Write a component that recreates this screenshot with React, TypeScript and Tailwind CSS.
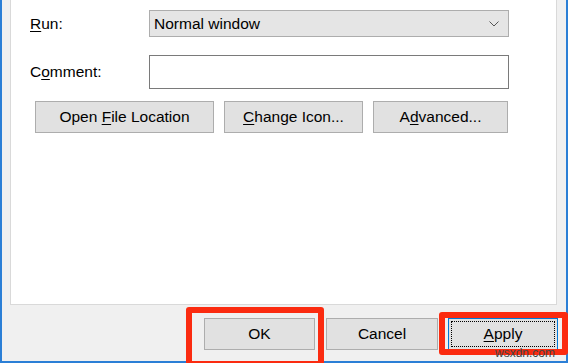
import React from "react";

const font = { fontFamily: '"Liberation Sans", Arial, sans-serif' };

function U({ children }: { children: React.ReactNode }) {
  return <span className="underline underline-offset-[2px] decoration-1">{children}</span>;
}

function Btn({ w, children }: { w: string; children: React.ReactNode }) {
  return (
    <div
      className={`${w} h-[32px] flex items-center justify-center border border-[#adadad] bg-[#e1e1e1] text-[15.5px] text-black`}
    >
      {children}
    </div>
  );
}

export default function App() {
  return (
    <div className="relative w-[568px] h-[363px] overflow-hidden bg-[#f0f0f0]" style={font}>
      <div className="flex h-full w-full flex-col border-l-2 border-r-2 border-b-2 border-[#2b7fd6] bg-[#f0f0f0]">
        {/* tab page */}
        <div className="ml-[8px] mr-[9px] h-[305px] shrink-0 border-x border-b border-[#d9d9d9] bg-white pt-[10px]">
          <div className="flex h-[27px] items-center pl-[19px]">
            <div className="w-[119px] text-[15.5px] text-black">
              <U>R</U>un:
            </div>
            <div className="flex h-[27px] w-[360px] items-center justify-between border border-[#adadad] bg-[#e5e5e5] pl-[4px] pr-[8px] text-[15.5px] text-black">
              <span>Normal window</span>
              <svg width="10" height="6" viewBox="0 0 10 6" className="mr-[1px]">
                <path d="M0.5 0.5 L5 5 L9.5 0.5" fill="none" stroke="#555" strokeWidth="1" />
              </svg>
            </div>
          </div>
          <div className="mt-[18px] flex h-[34px] items-center pl-[19px]">
            <div className="w-[119px] text-[15.5px] text-black">
              C<U>o</U>mment:
            </div>
            <div className="h-[34px] w-[360px] border border-[#7a7a7a] bg-white" />
          </div>
          <div className="mt-[12px] flex gap-[10px] pl-[24px]">
            <Btn w="w-[179px]">
              Open&nbsp;<U>F</U>ile Location
            </Btn>
            <Btn w="w-[139px]">
              <U>C</U>hange Icon...
            </Btn>
            <Btn w="w-[135px]">
              A<U>d</U>vanced...
            </Btn>
          </div>
        </div>
        {/* dialog buttons */}
        <div className="flex flex-1 justify-end pr-[8px] pt-[13px]">
          <Btn w="w-[111px]">OK</Btn>
          <div className="ml-[11px]">
            <Btn w="w-[112px]">Cancel</Btn>
          </div>
          <div className="relative ml-[10px] flex h-[32px] w-[110px] items-center justify-center border border-[#0078d7] bg-[#e1e1e1] text-[15.5px] text-black">
            <span className="absolute inset-[2px] border border-dotted border-black" />
            <span className="relative">
              <U>A</U>pply
            </span>
          </div>
        </div>
      </div>

      {/* highlight boxes */}
      <div className="absolute left-[186px] top-[307px] h-[60px] w-[138px] rounded-[3px] border-[6px] border-[#fb2b10]" />
      <div className="absolute left-[439px] top-[312px] h-[43px] w-[129px] rounded-[3px] border-[6px] border-[#fb2b10]" />
      <div className="absolute left-[495px] top-[347px] text-[12px] leading-[12px] text-[#444]">wsxdn.com</div>
    </div>
  );
}
